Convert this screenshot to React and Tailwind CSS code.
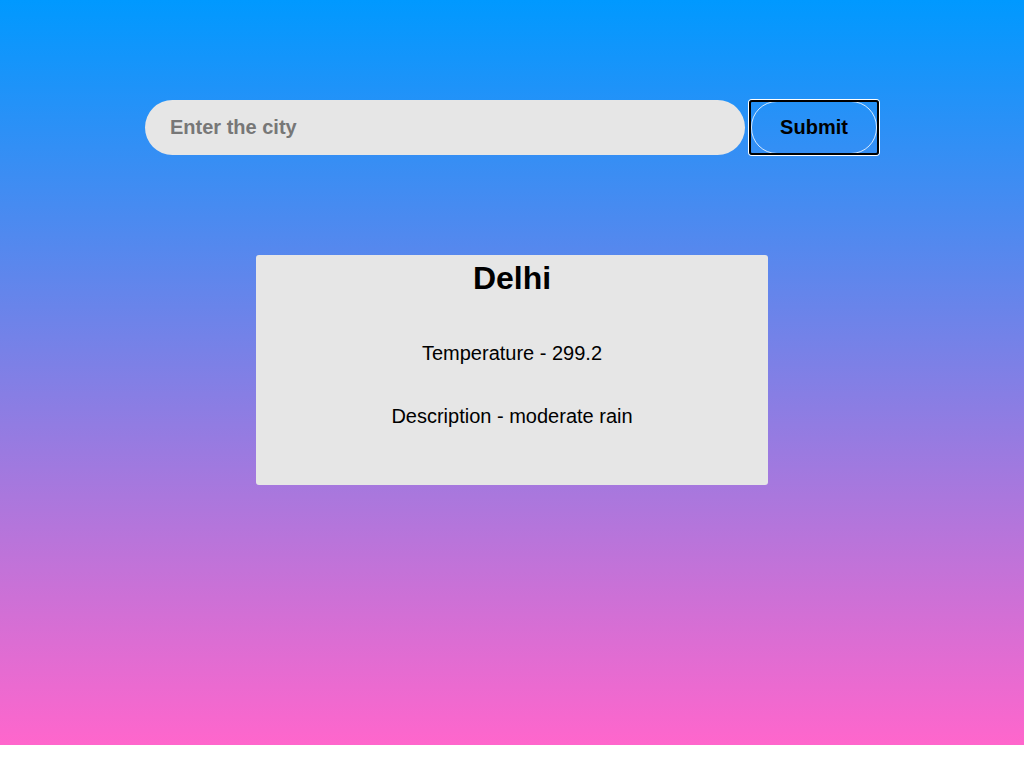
export default function App() {
  return (
    <div className="w-full h-[745px] bg-[linear-gradient(to_bottom,#0099ff,#ff66cc)] flex flex-col items-center" style={{ fontFamily: '"Liberation Sans", Arial, sans-serif' }}>
      <div className="mt-[100px] flex items-center">
        <input
          className="w-[600px] h-[55px] rounded-full bg-[#e6e6e6] pl-[25px] text-[20px] font-bold text-black placeholder:text-[#777777] outline-none"
          placeholder="Enter the city"
        />
        <div className="ml-[4px] w-[130px] h-[55px] rounded-[3px] border-2 border-black shadow-[0_0_0_1px_#ffffff] overflow-hidden">
          <button className="block w-full h-[53px] -mt-[1px] pb-[2px] rounded-[26px] border border-white/80 bg-transparent text-[20px] font-bold text-black">
            Submit
          </button>
        </div>
      </div>
      <div className="mt-[100px] w-[512px] h-[230px] rounded-[3px] bg-[#e6e6e6] flex flex-col items-center pt-[5px]">
        <h1 className="text-[32px] leading-[37px] font-bold text-black">Delhi</h1>
        <p className="mt-[45px] text-[20px] leading-[23px] text-black">Temperature - 299.2</p>
        <p className="mt-[40px] text-[20px] leading-[23px] text-black">Description - moderate rain</p>
      </div>
    </div>
  );
}
